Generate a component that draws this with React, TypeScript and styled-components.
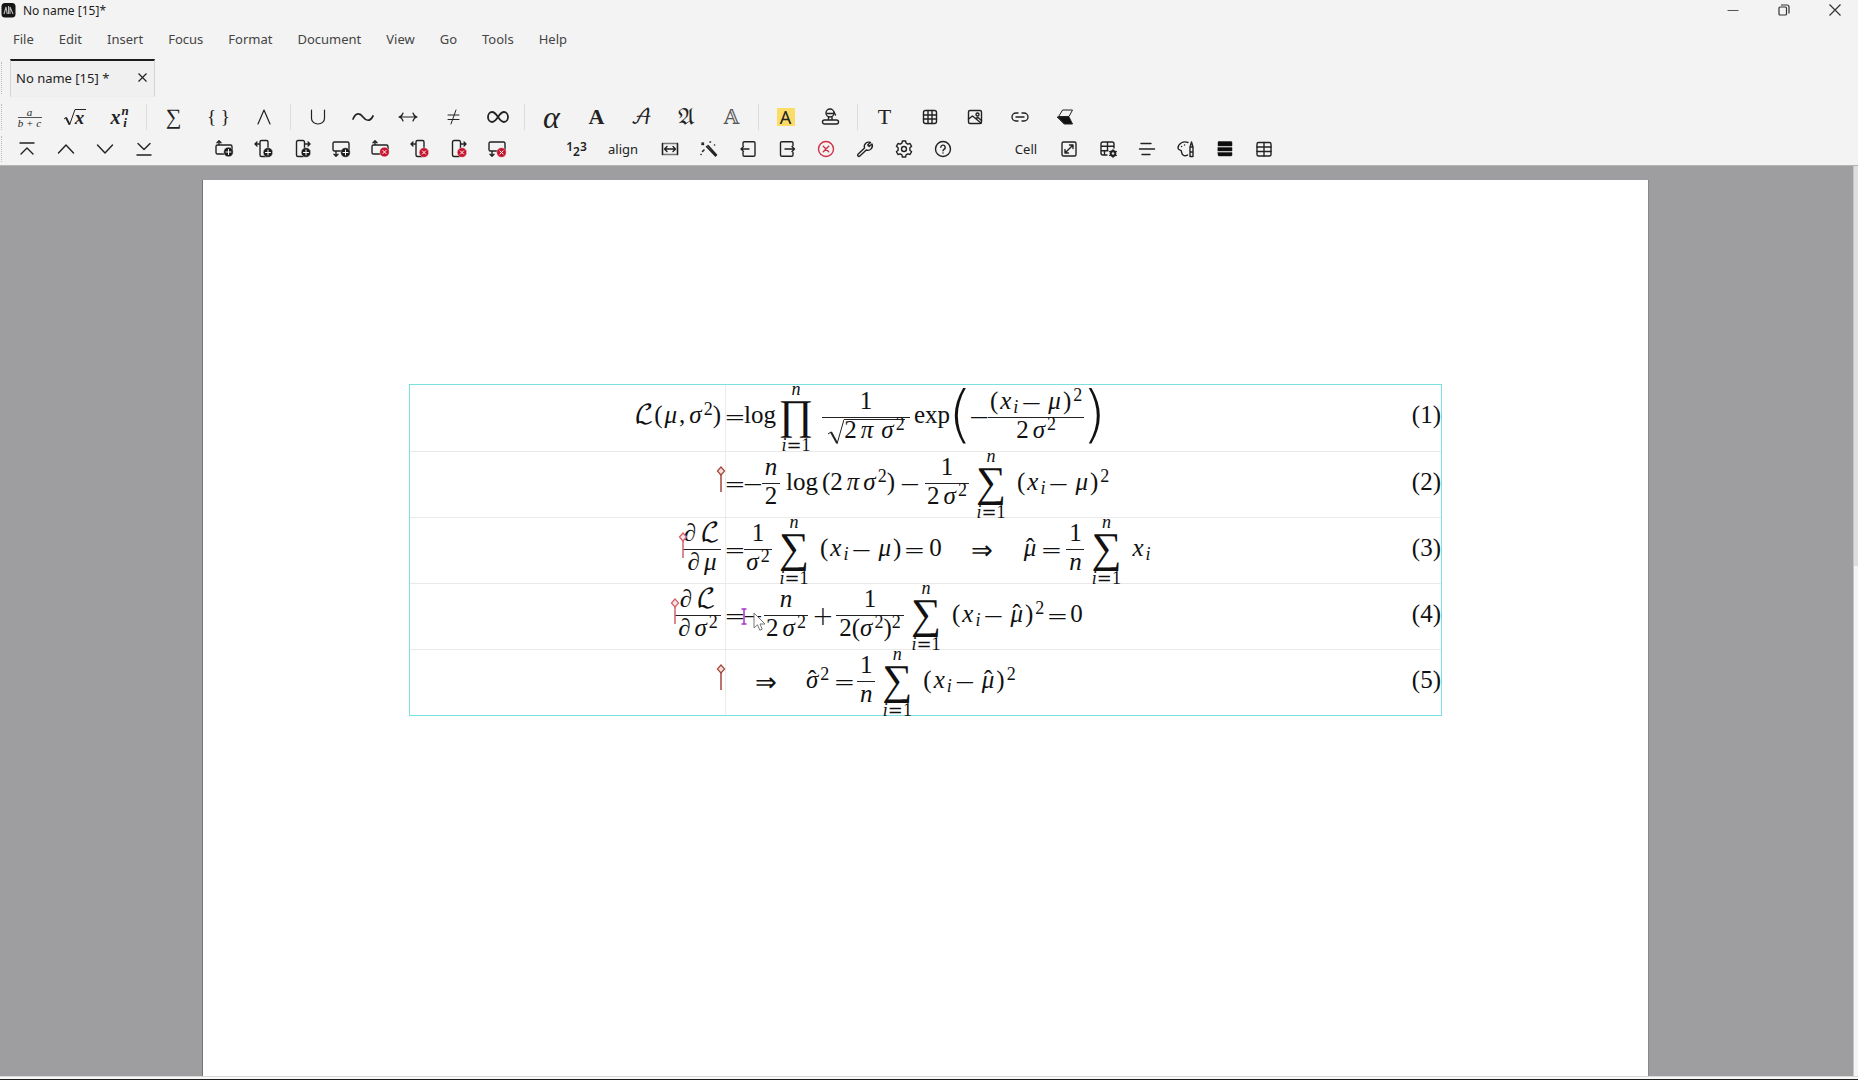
import React from "react";
import styled, { createGlobalStyle, css } from "styled-components";

const Global = createGlobalStyle`
  * { box-sizing: border-box; }
  body { margin: 0; background: #f3f3f3; overflow: hidden; }
`;

const UI = `"Noto Sans", "Open Sans", sans-serif`;
const MATH = `"Liberation Serif", "DejaVu Math TeX Gyre", "DejaVu Serif", serif`;
const OPS = `"DejaVu Sans", sans-serif`;

/* ---------- window chrome ---------- */

const Window = styled.div`
  height: 100vh;
  display: flex;
  flex-direction: column;
  background: #f3f3f3;
  color: #222;
  font-family: ${UI};
  font-size: 13px;
`;

const TitleBar = styled.header`
  height: 22px;
  display: flex;
  align-items: center;
  padding: 0 0 2px 1px;
  gap: 7px;
  font-size: 12px;
  color: #1c1c1c;
`;

const Title = styled.span`
  flex: 1;
`;

const WindowButtons = styled.div`
  display: flex;
  gap: 5px;
`;

const PlainButton = styled.button`
  border: 0;
  padding: 0;
  background: transparent;
  color: inherit;
  font: inherit;
  display: flex;
  align-items: center;
  justify-content: center;
`;

const WindowButton = styled(PlainButton)`
  width: 46px;
  height: 20px;
`;

const MenuBar = styled.nav`
  height: 37px;
  display: flex;
  align-items: center;
  gap: 1px;
  padding: 0 0 3px 1px;
  color: #444;
`;

const MenuItem = styled(PlainButton)`
  padding: 0 12px;
`;

const TabBar = styled.div`
  height: 38px;
  display: flex;
  margin-bottom: 4px;
`;

const Grip = styled.span`
  width: 2px;
  margin: 3px 7px 3px 1px;
  border-left: 1px dotted #bbb;
`;

const Tab = styled.div`
  width: 145px;
  display: flex;
  align-items: center;
  justify-content: space-between;
  padding: 0 7px 2px 5px;
  background: #f0f0f0;
  border: 1px solid #d4d4d4;
  border-top: 2px solid #1b1b1b;
  border-bottom-color: #ededed;
`;

const ToolRow = styled.div`
  height: 32px;
  display: flex;
  align-items: center;
  padding-right: 8px;
`;

const RowGrip = styled.span`
  width: 2px;
  height: 26px;
  margin: 0 4px 0 1px;
  border-left: 1px dotted #bbb;
`;

const Group = styled.div`
  display: flex;
  align-items: center;
  margin-right: 41px;
`;

const Separator = styled.span`
  width: 9px;
  height: 26px;
  display: flex;
  justify-content: center;
  &::before {
    content: "";
    width: 1px;
    background: #dcdcdc;
  }
`;

const Tool = styled(PlainButton)<{ $w?: number }>`
  width: ${(p) => p.$w ?? 39}px;
  height: 30px;
  flex: none;
  svg { display: block; overflow: visible; }
`;

const Glyph = styled.span<{ $size?: number; $bold?: boolean; $italic?: boolean; $color?: string }>`
  font-family: ${MATH};
  font-size: ${(p) => p.$size ?? 24}px;
  line-height: 24px;
  font-weight: ${(p) => (p.$bold ? 700 : 400)};
  font-style: ${(p) => (p.$italic ? "italic" : "normal")};
  color: ${(p) => p.$color ?? "#222"};
`;

const Highlight = styled.span`
  width: 18px;
  height: 18px;
  background: #fbdc67;
  font-size: 18px;
  line-height: 18px;
  text-align: center;
`;

const MiniFraction = styled.span`
  display: flex;
  flex-direction: column;
  align-items: center;
  font: italic 11px/10px ${MATH};
  span:first-child {
    width: 24px;
    border-bottom: 1px solid #555;
  }
`;

const MiniRoot = styled.span`
  display: flex;
  font: italic bold 19px/16px ${MATH};
  span {
    border-top: 1px solid #222;
    padding-right: 2px;
  }
`;

const MiniScripts = styled.span`
  display: flex;
  align-items: center;
  gap: 1px;
  font: italic bold 20px/20px ${MATH};
`;

const MiniStack = styled.span`
  display: flex;
  flex-direction: column;
  font-size: 13px;
  line-height: 12px;
`;

const Digits = styled.span`
  font-size: 12px;
  line-height: 16px;
  font-weight: 600;
  display: flex;
  span:nth-child(2) { padding-top: 5px; }
`;

/* ---------- workspace ---------- */

const Workspace = styled.div`
  flex: 1;
  min-height: 0;
  display: flex;
  background: #9e9ea0;
  border-top: 1px solid #b4b4b6;
`;

const Canvas = styled.main`
  flex: 1;
  min-width: 0;
  display: flex;
  padding: 14px 204px 0 202px;
`;

const Page = styled.section`
  flex: 1;
  padding: 204px 206px 0;
  background: #fff;
  border-left: 1px solid #747476;
  border-right: 1px solid #88888a;
`;

const ScrollTrack = styled.div`
  width: 5px;
  background: #f4f4f4;
  border-left: 1px solid #c4c4c4;
`;

const ScrollThumb = styled.div`
  height: 44%;
  background: #dedede;
`;

const StatusEdge = styled.footer`
  height: 4px;
  background: #f8f8f8;
  border-top: 1px solid #d8d8d8;
  border-bottom: 1px solid #1e1e1e;
`;

/* ---------- formulas ---------- */

const Equations = styled.div`
  border: 1px solid #79e0e4;
  color: #111;
  font-family: ${MATH};
  font-size: 25px;
`;

const Equation = styled.div`
  height: 66px;
  display: grid;
  grid-template-columns: 316px 1fr auto;
  grid-template-rows: minmax(0, 1fr);
  & + & { border-top: 1px solid #e9e9e9; }
`;

const Left = styled.div`
  display: flex;
  align-items: center;
  justify-content: flex-end;
  padding: 0 4px 2px 0;
  border-right: 1px solid #ececec;
`;

const Right = styled.div`
  display: flex;
  align-items: center;
  padding-bottom: 2px;
`;

const Run = styled.span`
  display: inline-flex;
  align-items: center;
  justify-content: center;
`;

const T = styled.span<{ $it?: boolean }>`
  line-height: 24px;
  padding-bottom: 4px;
  white-space: pre;
  font-style: ${(p) => (p.$it ? "italic" : "normal")};
`;

const Sym = styled.span<{ $w?: number }>`
  width: ${(p) => p.$w ?? 18}px;
  display: inline-flex;
  justify-content: center;
  font-family: ${OPS};
  font-weight: 200;
  font-size: 26px;
  line-height: 28px;
`;

const Sup = styled.span`
  font-size: 18px;
  line-height: 12px;
  padding-bottom: 16px;
`;

const Sub = styled.span`
  font-size: 18px;
  font-style: italic;
  line-height: 16px;
  padding: 10px 0 2px;
`;

const Sp = styled.span<{ $w: number }>`
  width: ${(p) => p.$w}px;
  flex: none;
`;

const Script = styled(T)`
  font-family: "DejaVu Math TeX Gyre", "DejaVu Serif", serif;
  font-size: 26px;
`;

const HatBase = styled(T)`
  position: relative;
`;

const HatMark = styled.span`
  position: absolute;
  left: 0;
  right: 0;
  top: 0;
  text-align: center;
  font-style: normal;
`;

const Hat = ({ children }: { children: string }) => (
  <HatBase $it>{children}<HatMark>ˆ</HatMark></HatBase>
);

const FracBox = styled.span<{ $w?: number }>`
  display: inline-flex;
  flex-direction: column;
  ${(p) => p.$w && css`width: ${p.$w}px;`}
`;

const Bar = styled.span`
  height: 1px;
  background: #222;
`;

const Frac = ({ n, d, w }: { n: React.ReactNode; d: React.ReactNode; w?: number }) => (
  <FracBox $w={w}>
    <Run>{n}</Run>
    <Bar />
    <Run>{d}</Run>
  </FracBox>
);

const OpBox = styled.span`
  width: 36px;
  display: inline-flex;
  flex-direction: column;
  align-items: center;
`;

const Limit = styled.span`
  display: flex;
  justify-content: center;
  font-size: 18px;
  line-height: 16px;
  i + span { font-family: ${OPS}; }
`;

const OpGlyph = styled.span`
  height: 40px;
  font-size: 42px;
  line-height: 36px;
`;

const BigOp = ({ op = "∑" }: { op?: string }) => (
  <OpBox>
    <Limit><i>n</i></Limit>
    <OpGlyph>{op}</OpGlyph>
    <Limit><i>i</i><span>=</span><span>1</span></Limit>
  </OpBox>
);

const Fence = styled.span`
  width: 20px;
  display: inline-flex;
  justify-content: center;
  font-family: ${OPS};
  font-weight: 200;
  font-size: 62px;
  line-height: 56px;
  height: 62px;
`;

const RootBody = styled.span`
  display: inline-flex;
  align-items: center;
  border-top: 1px solid #222;
  height: 26px;
`;

const Root = ({ children }: { children: React.ReactNode }) => (
  <Run>
    <svg width="17" height="28" viewBox="0 0 17 28" fill="none" stroke="#222">
      <path d="M1 16l3-2" strokeWidth="1" />
      <path d="M4 14l6 11" strokeWidth="2" />
      <path d="M10 26L17 1.500" strokeWidth="1" />
    </svg>
    <RootBody>{children}</RootBody>
  </Run>
);

const Anchor = styled.span`
  position: relative;
  width: 0;
  height: 0;
`;

const AnchorArt = styled.svg`
  position: absolute;
  left: -5px;
  top: -18px;
`;

const CaretArt = styled.svg`
  position: absolute;
  left: -3px;
  top: -8px;
`;

const PointerArt = styled.svg`
  position: absolute;
  left: 9px;
  top: -4px;
`;

const Marker = ({ color = "#a5463c", fill = "#f7e0dc" }: { color?: string; fill?: string }) => (
  <Anchor>
    <AnchorArt width="10" height="27" viewBox="0 0 10 27" fill="none" stroke={color}>
      <path d="M5 8v18" strokeWidth="1.500" />
      <path d="M5 1l3.600 4L5 9 1.400 5z" fill={fill} strokeWidth="1.200" />
    </AnchorArt>
  </Anchor>
);

const SigmaSq = () => (<><T $it>σ</T><Sp $w={2} /><Sup>2</Sup></>);

const XMinusMu = ({ hat, sq }: { hat?: boolean; sq?: boolean }) => (
  <>
    <T>(</T><Sp $w={2} /><T $it>x</T><Sp $w={2} /><Sub>i</Sub><Sp $w={4} /><Sym>−</Sym><Sp $w={8} />
    {hat ? <Hat>μ</Hat> : <T $it>μ</T>}<Sp $w={2} /><T>)</T>{sq && <><Sp $w={2} /><Sup>2</Sup></>}
  </>
);

const Row = ({ left, children, no }: { left: React.ReactNode; children: React.ReactNode; no: number }) => (
  <Equation>
    <Left>{left}</Left>
    <Right>{children}</Right>
    <Right><T>({no})</T></Right>
  </Equation>
);

/* ---------- icons ---------- */

const Icon = ({ children, w = 20, sw = 1.4 }: { children: React.ReactNode; w?: number; sw?: number }) => (
  <svg width={w} height="20" viewBox={`0 0 ${w} 20`} fill="none" stroke="#222" strokeWidth={sw} strokeLinecap="round" strokeLinejoin="round" aria-hidden="true">
    {children}
  </svg>
);

const Badge = ({ x, y, del }: { x: number; y: number; del?: boolean }) => (
  <g>
    <circle cx={x} cy={y} r="4.800" fill={del ? "#c8142f" : "#1c1c1c"} stroke="#f3f3f3" strokeWidth="0.400" />
    {del
      ? <path d={`M${x - 1.6} ${y - 1.6}l3.200 3.200m0-3.200l-3.200 3.200`} stroke="#fff" strokeWidth="1" />
      : <path d={`M${x - 2.5} ${y}h5m-2.500-2.500v5`} stroke="#fff" strokeWidth="1" />}
  </g>
);

const shapes = {
  above: { d: "M5 6H3.500a1.500 1.500 0 0 0-1.500 1.500v6A1.500 1.500 0 0 0 3.500 15H16.500a1.500 1.500 0 0 0 1.500-1.500v-6A1.500 1.500 0 0 0 16.500 6H5V2M3 3.800l2-2 2 2", x: 14.5, y: 13 },
  before: { d: "M7 5V3a1.500 1.500 0 0 1 1.500-1.500h5A1.500 1.500 0 0 1 15 3v13a1.500 1.500 0 0 1-1.500 1.500h-5A1.500 1.500 0 0 1 7 16V5H2.500M4 3L2 5l2 2", x: 15, y: 13.5 },
  after: { d: "M12.500 5V3A1.500 1.500 0 0 0 11 1.500H6A1.500 1.500 0 0 0 4.500 3v13A1.500 1.500 0 0 0 6 17.500h5a1.500 1.500 0 0 0 1.500-1.500V5h5M16 3l2 2-2 2", x: 14, y: 13.5 },
  below: { d: "M5 12H3.500A1.500 1.500 0 0 1 2 10.500v-6A1.500 1.500 0 0 1 3.500 3h13A1.500 1.500 0 0 1 18 4.500v6a1.500 1.500 0 0 1-1.500 1.500H5v5M3 15.200l2 2 2-2", x: 14.5, y: 13.5 },
};

const CellIcon = ({ at, del }: { at: keyof typeof shapes; del?: boolean }) => (
  <Icon><path d={shapes[at].d} /><Badge x={shapes[at].x} y={shapes[at].y} del={del} /></Icon>
);

const gear = "M8.400 2h3.200l.5 2.200 1.700 1 2.200-.7 1.600 2.800-1.700 1.500v2.400l1.700 1.500-1.600 2.800-2.200-.7-1.700 1-.5 2.200H8.400l-.5-2.200-1.700-1-2.200.7-1.600-2.800 1.700-1.500V8.800L2.400 7.300 4 4.500l2.200.7 1.700-1z";

const menus = ["File", "Edit", "Insert", "Focus", "Format", "Document", "View", "Go", "Tools", "Help"];

const Wide = ({ label, children }: { label: string; children: React.ReactNode }) => (
  <Tool $w={45} aria-label={label}>{children}</Tool>
);

export default function App() {
  return (
    <Window>
      <Global />
      <TitleBar>
        <svg width="15" height="16" viewBox="0 0 15 16" aria-hidden="true">
          <rect x="0.500" y="1" width="14" height="14.500" rx="3.500" fill="#151515" />
          <path d="M3 12l2-7 1.200 7M7.500 4v8M9 12V5l3 7" fill="none" stroke="#bbb" strokeWidth="1.100" />
        </svg>
        <Title>No name [15]*</Title>
        <WindowButtons>
          <WindowButton aria-label="Minimize"><svg width="12" height="12" stroke="#555"><path d="M0.500 6.500h11" /></svg></WindowButton>
          <WindowButton aria-label="Restore">
            <svg width="12" height="12" viewBox="0 0 12 12" fill="none" stroke="#333" strokeWidth="1.200">
              <rect x="1" y="3" width="7.500" height="8" rx="1" /><path d="M3 1h6a2 2 0 0 1 2 2v6.500" />
            </svg>
          </WindowButton>
          <WindowButton aria-label="Close"><svg width="12" height="12" stroke="#333" strokeWidth="1.200"><path d="M0.500 0.500l11 11M11.500 0.500l-11 11" /></svg></WindowButton>
        </WindowButtons>
      </TitleBar>

      <MenuBar>{menus.map((m) => <MenuItem key={m}>{m}</MenuItem>)}</MenuBar>

      <TabBar>
        <Grip />
        <Tab>
          <span>No name [15] *</span>
          <PlainButton aria-label="Close tab"><svg width="9" height="9" stroke="#222" strokeWidth="1.200"><path d="M0.500 0.500l8 8M8.500 0.500l-8 8" /></svg></PlainButton>
        </Tab>
      </TabBar>

      <ToolRow>
        <RowGrip />
        <Wide label="Fraction"><MiniFraction><span>a</span><span>b + c</span></MiniFraction></Wide>
        <Wide label="Root">
          <MiniRoot>
            <svg width="12" height="17" viewBox="0 0 12 17" fill="none" stroke="#222"><path d="M1 10l2-1.500" /><path d="M3 8.500l3.500 7" strokeWidth="1.800" /><path d="M6.500 16L12 0.500" /></svg>
            <span>x</span>
          </MiniRoot>
        </Wide>
        <Wide label="Scripts"><MiniScripts>x<MiniStack><span>n</span><span>i</span></MiniStack></MiniScripts></Wide>
        <Separator />
        <Wide label="Sum"><Glyph $size={22}>∑</Glyph></Wide>
        <Wide label="Braces"><Glyph $size={19}>{"{ }"}</Glyph></Wide>
        <Wide label="Wedge"><Icon sw={1.2}><path d="M4 17L10 3l6 14" /></Icon></Wide>
        <Separator />
        <Wide label="Union"><Icon sw={1.2}><path d="M3.500 3v8.500a6.500 5.500 0 0 0 13 0V3" /></Icon></Wide>
        <Wide label="Similar"><Icon w={22} sw={1.7}><path d="M1 12C4 5 8 6 11 10s7 5 10-1" /></Icon></Wide>
        <Wide label="Arrow"><Icon sw={1.2}><path d="M1 10h18M5 6c-.5 2-2 3.500-4 4 2 .5 3.500 2 4 4M15 6c.5 2 2 3.500 4 4-2 .5-3.500 2-4 4" /></Icon></Wide>
        <Wide label="Not equal"><Icon sw={1}><path d="M5 8h11M5 12.500h11M13 3L8 17" /></Icon></Wide>
        <Wide label="Infinity"><Icon w={22} sw={1.8}><path d="M11 10C8 5.500 6.500 5 5 5a4 5 0 0 0 0 10c1.500 0 3-.5 6-5s4.500-5 6-5a4 5 0 0 1 0 10c-1.500 0-3-.5-6-5z" /></Icon></Wide>
        <Separator />
        <Wide label="Greek"><Glyph $size={32} $italic>α</Glyph></Wide>
        <Wide label="Bold"><Glyph $size={22} $bold>A</Glyph></Wide>
        <Wide label="Script"><Glyph $size={20}>𝒜</Glyph></Wide>
        <Wide label="Fraktur"><Glyph $size={20}>𝔄</Glyph></Wide>
        <Wide label="Double-struck"><Glyph $size={20} $color="#555">𝔸</Glyph></Wide>
        <Separator />
        <Wide label="Highlight"><Highlight>A</Highlight></Wide>
        <Wide label="Fill">
          <Icon><circle cx="9" cy="6" r="4" /><path d="M6 6.500h6M13 5l1.500 3M7.500 10v3M11 10v3M3.500 13h12a1.700 1.700 0 0 1 0 4h-12a1.700 1.700 0 0 1 0-4z" /></Icon>
        </Wide>
        <Separator />
        <Wide label="Text"><Glyph $size={22}>T</Glyph></Wide>
        <Wide label="Table"><Icon><rect x="3.500" y="3.500" width="13" height="13" rx="2" /><path d="M3.500 8h13M3.500 12h13M8 3.500v13M12 3.500v13" /></Icon></Wide>
        <Wide label="Image"><Icon><rect x="3.500" y="3.500" width="13" height="13" rx="1.500" /><circle cx="12.500" cy="7.500" r="1.500" /><path d="M3.500 12l4-3 8.500 7M11 11.500l2-1 3.500 3" /></Icon></Wide>
        <Wide label="Link"><Icon><path d="M8 6H6a4 4 0 0 0 0 8h2M12 6h2a4 4 0 0 1 0 8h-2M6 10h8" /></Icon></Wide>
        <Wide label="Eraser"><Icon sw={1}><path d="M8 3h9.500L14 9.500H4z" /><path d="M2.500 10H14l3.500 7h-8z" fill="#111" /></Icon></Wide>
      </ToolRow>

      <ToolRow>
        <RowGrip />
        <Group>
          <Tool aria-label="First"><Icon><path d="M3 4h14M4 15l6-6 6 6" /></Icon></Tool>
          <Tool aria-label="Previous"><Icon><path d="M2.500 14l7.500-8 7.500 8" /></Icon></Tool>
          <Tool aria-label="Next"><Icon><path d="M2.500 6l7.500 8 7.500-8" /></Icon></Tool>
          <Tool aria-label="Last"><Icon><path d="M4 4.500l6 6 6-6M3 16h14" /></Icon></Tool>
        </Group>
        <Group>
          <Tool aria-label="Insert row above"><CellIcon at="above" /></Tool>
          <Tool aria-label="Insert column before"><CellIcon at="before" /></Tool>
          <Tool aria-label="Insert column after"><CellIcon at="after" /></Tool>
          <Tool aria-label="Insert row below"><CellIcon at="below" /></Tool>
          <Tool aria-label="Remove row above"><CellIcon at="above" del /></Tool>
          <Tool aria-label="Remove column before"><CellIcon at="before" del /></Tool>
          <Tool aria-label="Remove column after"><CellIcon at="after" del /></Tool>
          <Tool aria-label="Remove row below"><CellIcon at="below" del /></Tool>
        </Group>
        <Group>
          <Tool aria-label="Numbering"><Digits><span>1</span><span>2</span><span>3</span></Digits></Tool>
          <Tool $w={54}>align</Tool>
          <Tool aria-label="Fit width"><Icon><rect x="2.500" y="4.500" width="15" height="11" stroke="#777" /><path d="M2.500 4.500v11M17.500 4.500v11M5 10h10M7 7.500L4.500 10 7 12.500M13 7.500l2.500 2.500-2.500 2.500" /></Icon></Tool>
          <Tool aria-label="Clean up"><Icon sw={1.6}><path d="M7.500 7.500l9 9.500M9 6.500l8.500 9.500M2 15.500h.1M3 4l1.500 1.500M4.500 4L3 5.500M11 3h.5M15.500 6h.1M5 11l-1.500 1.500" /></Icon></Tool>
          <Tool aria-label="Exit left"><Icon><path d="M5 6.500V4a1.300 1.300 0 0 1 1.300-1.300h9.400A1.300 1.300 0 0 1 17 4v12a1.300 1.300 0 0 1-1.300 1.300H6.300A1.300 1.300 0 0 1 5 16v-2.500M11 10H3M5.500 7.500L3 10l2.500 2.500" /></Icon></Tool>
          <Tool aria-label="Exit right"><Icon><path d="M16 6.500V4a1.300 1.300 0 0 0-1.300-1.300H4.800A1.300 1.300 0 0 0 3.500 4v12a1.300 1.300 0 0 0 1.300 1.300h9.900A1.300 1.300 0 0 0 16 16v-2.500M8 10h9.500M15 7.500l2.500 2.500-2.500 2.500" /></Icon></Tool>
          <Tool aria-label="Remove"><svg width="20" height="20" fill="none" stroke="#cf3145" strokeWidth="1.400" strokeLinecap="round"><circle cx="10" cy="10" r="7.500" /><path d="M7.300 7.300l5.400 5.400M12.700 7.300l-5.400 5.400" /></svg></Tool>
          <Tool aria-label="Tools"><Icon><path d="M15.500 3.500a4.500 4.500 0 0 0-6 5.500L3 15.300a1.200 1.200 0 0 0 1.800 1.800L11.300 11a4.500 4.500 0 0 0 5.700-6l-2.800 2.500-1.500-1.400z" /></Icon></Tool>
          <Tool aria-label="Settings"><Icon><path d={gear} /><circle cx="10" cy="10" r="2.500" /></Icon></Tool>
          <Tool aria-label="Help"><Icon><circle cx="10" cy="10" r="7.500" /><path d="M7.800 8.300a2.200 2.200 0 1 1 3.200 2c-.7.400-1 .8-1 1.500M10 14h.05" /></Icon></Tool>
        </Group>
        <Group>
          <Tool $w={46}>Cell</Tool>
          <Tool aria-label="Resize cell"><Icon><rect x="3" y="3" width="14" height="14" rx="1.500" /><path d="M6 14l8-8M10.500 6H14v3.500M6 10.500V14h3.500" /></Icon></Tool>
          <Tool aria-label="Cell settings">
            <Icon>
              <path d="M9 16H5a2 2 0 0 1-2-2V5a2 2 0 0 1 2-2h9a2 2 0 0 1 2 2v4M3 7.300h13M3 11.700h7M9.500 3v8.700M6.500 11.700V16" />
              <circle cx="15" cy="14.500" r="2.400" strokeWidth="2" /><path d="M15 10.300v8.400M11.400 12.400l7.200 4.200M18.600 12.400l-7.200 4.200" strokeWidth="1" /><circle cx="15" cy="14.500" r="1" fill="#fff" stroke="none" />
            </Icon>
          </Tool>
          <Tool aria-label="Alignment"><Icon><path d="M4 4.500h10M2.500 10h15M5 15.500h8" /></Icon></Tool>
          <Tool aria-label="Colors"><Icon><path d="M12 3.500C7 1.500 2 5 2 9c0 2 2 1.500 3 2.500s0 3 2 4.500 3.500.500 4.500 0M5.500 7.500h.1M8.500 6h.1M14 17.500V8l1.500-5L17 8v9.500zM14 8h3M14 13h3" /></Icon></Tool>
          <Tool aria-label="Rows"><Icon><path d="M4 2.500h12a1 1 0 0 1 1 1V7H3V3.500a1 1 0 0 1 1-1zM3 8.500h14v3.500H3zM3 13.500h14V16a1 1 0 0 1-1 1H4a1 1 0 0 1-1-1z" fill="#0c0c0c" strokeWidth="0.500" /></Icon></Tool>
          <Tool aria-label="Borders"><Icon><rect x="3" y="3.500" width="14" height="13.500" rx="1.500" /><path d="M3 8h14M3 12.500h14M10 3.500V17" /></Icon></Tool>
        </Group>
      </ToolRow>

      <Workspace>
        <Canvas>
          <Page>
            <Equations>
              <Row no={1} left={<><Script>ℒ</Script><T>(</T><Sp $w={2} /><T $it>μ</T><Sp $w={2} /><T>,</T><Sp $w={4} /><SigmaSq /><T>)</T></>}>
                <Sym>=</Sym><T>log</T><Sp $w={2} /><BigOp op="∏" /><Sp $w={8} />
                <Frac w={88} n={<T>1</T>} d={<Root><T>2</T><Sp $w={4} /><T $it>π</T><Sp $w={8} /><SigmaSq /></Root>} />
                <Sp $w={4} /><T>exp</T><Fence>(</Fence>
                <Sym>−</Sym>
                <Frac w={96} n={<XMinusMu sq />} d={<><T>2</T><Sp $w={4} /><SigmaSq /></>} />
                <Fence>)</Fence>
              </Row>
              <Row no={2} left={<Marker />}>
                <Sym>=</Sym><Sym>−</Sym>
                <Frac w={18} n={<T $it>n</T>} d={<T>2</T>} />
                <Sp $w={6} /><T>log</T><Sp $w={4} /><T>(2</T><Sp $w={4} /><T $it>π</T><Sp $w={4} /><SigmaSq /><T>)</T>
                <Sp $w={6} /><Sym>−</Sym><Sp $w={6} />
                <Frac w={44} n={<T>1</T>} d={<><T>2</T><Sp $w={4} /><SigmaSq /></>} />
                <Sp $w={4} /><BigOp /><Sp $w={8} /><XMinusMu sq />
              </Row>
              <Row no={3} left={<><Marker color="#d0606c" fill="#fbe4e8" /><Frac w={38} n={<><T>∂</T><Sp $w={4} /><Script>ℒ</Script></>} d={<><T>∂</T><Sp $w={4} /><T $it>μ</T></>} /></>}>
                <Sym>=</Sym>
                <Frac w={28} n={<T>1</T>} d={<SigmaSq />} />
                <Sp $w={4} /><BigOp /><Sp $w={8} /><XMinusMu />
                <Sp $w={4} /><Sym>=</Sym><Sp $w={6} /><T>0</T><Sp $w={28} /><Sym $w={24}>⇒</Sym><Sp $w={30} />
                <Hat>μ</Hat><Sp $w={6} /><Sym>=</Sym><Sp $w={6} />
                <Frac w={18} n={<T>1</T>} d={<T $it>n</T>} />
                <Sp $w={4} /><BigOp /><Sp $w={8} /><T $it>x</T><Sp $w={2} /><Sub>i</Sub>
              </Row>
              <Row no={4} left={<><Marker color="#d0606c" fill="#fbe4e8" /><Frac w={46} n={<><T>∂</T><Sp $w={4} /><Script>ℒ</Script></>} d={<><T>∂</T><Sp $w={4} /><SigmaSq /></>} /></>}>
                <Sym>=</Sym>
                <Anchor>
                  <CaretArt width="6" height="17" viewBox="0 0 6 17" stroke="#a92fd0" fill="none" strokeWidth="1.500"><path d="M0.500 1h5M3 1v15M0.500 16h5" /></CaretArt>
                  <PointerArt width="13" height="20" viewBox="0 0 13 20"><path d="M1 1v15l3.500-3.200 2.300 5.400 2.400-1L7 12h5z" fill="#fff" stroke="#777" /></PointerArt>
                </Anchor>
                <Sym>−</Sym><Sp $w={2} />
                <Frac w={44} n={<T $it>n</T>} d={<><T>2</T><Sp $w={4} /><SigmaSq /></>} />
                <Sp $w={6} /><Sym>+</Sym><Sp $w={4} />
                <Frac w={68} n={<T>1</T>} d={<><T>2(</T><SigmaSq /><T>)</T><Sup>2</Sup></>} />
                <Sp $w={4} /><BigOp /><Sp $w={8} /><XMinusMu hat sq />
                <Sp $w={4} /><Sym>=</Sym><Sp $w={4} /><T>0</T>
              </Row>
              <Row no={5} left={<Marker />}>
                <Sp $w={28} /><Sym $w={24}>⇒</Sym><Sp $w={28} />
                <Hat>σ</Hat><Sp $w={2} /><Sup>2</Sup><Sp $w={6} /><Sym>=</Sym><Sp $w={4} />
                <Frac w={18} n={<T>1</T>} d={<T $it>n</T>} />
                <Sp $w={4} /><BigOp /><Sp $w={8} /><XMinusMu hat sq />
              </Row>
            </Equations>
          </Page>
        </Canvas>
        <ScrollTrack><ScrollThumb /></ScrollTrack>
      </Workspace>
      <StatusEdge />
    </Window>
  );
}
